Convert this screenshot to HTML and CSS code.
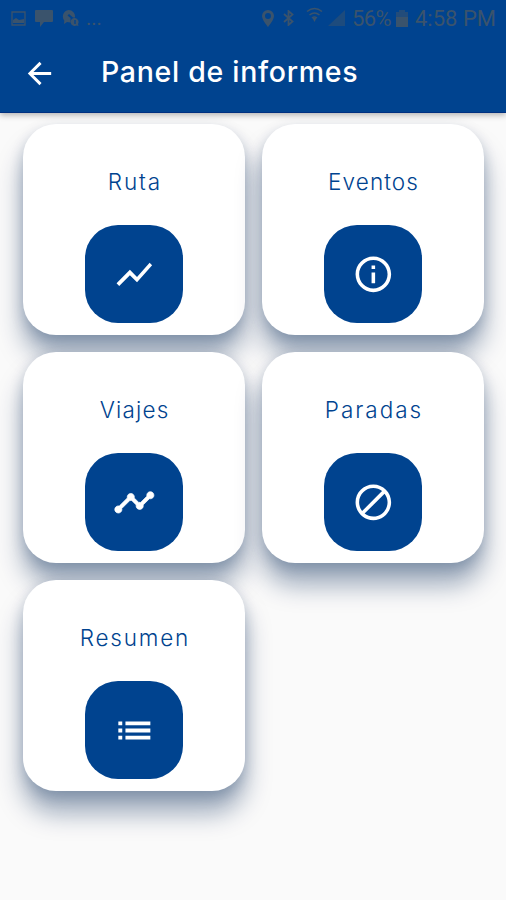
FILE: index.html
```html
<!DOCTYPE html>
<html lang="es">
<head>
    <meta charset="UTF-8">
    <meta name="viewport" content="width=device-width, initial-scale=1.0">
    <title>Panel de informes</title>
    <link rel="stylesheet" href="styles.css">
</head>
<body>
    <header class="header">
        <div class="status-bar">
            <div class="status-left">
                <svg width="15" height="15" viewBox="0 0 15 15"><path d="M1 1h13v13H1z" fill="none" stroke="currentColor" stroke-width="1.3"/><path d="M2 12V9l3-2 3 2 5-1v4z"/></svg>
                <svg width="18" height="17" viewBox="0 0 18 17"><path d="M1 0h16q1 0 1 1v10q0 1-1 1H9l-4 5v-5H1q-1 0-1-1V1q0-1 1-1z"/></svg>
                <svg width="17" height="16" viewBox="0 0 17 16"><path fill-rule="evenodd" d="M6.500 0A6.500 6.500 0 0 1 13 7.500h-2L7 4 5.500 5.500 8.500 8v4.500L5 12l-3 2 .3-3.500A6.500 6.500 0 0 1 6.500 0z"/><path fill-rule="evenodd" d="M13 8a4 4 0 0 1 3 6l.5 2-2-.5A4 4 0 1 1 13 8zm-.7 2v4h1.400v-4z"/></svg>
                <span class="dots">...</span>
            </div>
            <div class="status-right">
                <svg class="pin" width="12" height="17" viewBox="0 0 12 17"><path fill-rule="evenodd" d="M6 0a6 6 0 0 1 6 6c0 4-6 11-6 11S0 10 0 6a6 6 0 0 1 6-6zm0 3a3 3 0 1 0 0 6 3 3 0 0 0 0-6z"/></svg>
                <svg class="bluetooth" width="11" height="16" viewBox="0 0 11 16"><path d="M1 4l8.500 7.500L5.500 15V1l4 3.500L1 12" fill="none" stroke="currentColor" stroke-width="1.8"/></svg>
                <svg class="wifi" width="17" height="16" viewBox="0 0 17 16"><path d="M1 4.500q7.500-6 15 0M3.500 8q5-4 10 0M6 11q2.500-2 5 0" fill="none" stroke="currentColor" stroke-width="1.600"/><path d="M6.500 11h4l-2 4z"/></svg>
                <svg class="signal" width="17" height="16" viewBox="0 0 17 16"><path d="M17 0v16H0z"/></svg>
                <span class="battery-text">56%</span>
                <svg class="battery" width="12" height="17" viewBox="0 0 12 17"><path d="M3 0h6v2h3v15H0V2h3z" opacity=".6"/><path d="M0 7h12v10H0z"/></svg>
                <span class="time">4:58 PM</span>
            </div>
        </div>
        <div class="toolbar">
            <svg class="back" viewBox="0 0 24 24"><path d="M20 11H7.830l5.590-5.590L12 4l-8 8 8 8 1.410-1.410L7.830 13H20v-2z"/></svg>
            <h1>Panel de informes</h1>
        </div>
    </header>

    <main class="grid">
        <div class="card">
            <h2 class="ruta">Ruta</h2>
            <div class="icon">
                <svg viewBox="0 0 24 24"><path d="M3.500 18.490l6-6.010 4 4L22 6.920l-1.410-1.410-7.090 7.970-4-4L2 16.990z"/></svg>
            </div>
        </div>
        <div class="card">
            <h2 class="eventos">Eventos</h2>
            <div class="icon">
                <svg viewBox="0 0 24 24"><path d="M11 7h2v2h-2zm0 4h2v6h-2zm1-9C6.480 2 2 6.480 2 12s4.480 10 10 10 10-4.480 10-10S17.520 2 12 2zm0 18c-4.410 0-8-3.590-8-8s3.590-8 8-8 8 3.590 8 8-3.590 8-8 8z"/></svg>
            </div>
        </div>
        <div class="card">
            <h2 class="viajes">Viajes</h2>
            <div class="icon">
                <svg viewBox="0 0 24 24"><path d="M23 8c0 1.100-.9 2-2 2-.18 0-.35-.02-.51-.07l-3.560 3.550c.05.16.07.34.07.52 0 1.100-.9 2-2 2s-2-.9-2-2c0-.18.02-.36.07-.52l-2.550-2.550c-.16.05-.34.07-.52.07s-.36-.02-.52-.07l-4.550 4.560c.05.16.07.33.07.51 0 1.100-.9 2-2 2s-2-.9-2-2 .9-2 2-2c.18 0 .35.02.51.07l4.560-4.550C8.020 9.360 8 9.180 8 9c0-1.100.9-2 2-2s2 .9 2 2c0 .18-.02.36-.07.52l2.550 2.550c.16-.05.34-.07.52-.07s.36.02.52.07l3.550-3.560C19.020 8.350 19 8.180 19 8c0-1.100.9-2 2-2s2 .9 2 2z" stroke="currentColor" stroke-width=".4"/></svg>
            </div>
        </div>
        <div class="card">
            <h2 class="paradas">Paradas</h2>
            <div class="icon">
                <svg viewBox="0 0 24 24"><path d="M12 2C6.480 2 2 6.480 2 12s4.480 10 10 10 10-4.480 10-10S17.520 2 12 2zM4 12c0-4.420 3.580-8 8-8 1.850 0 3.550.63 4.900 1.690L5.690 16.900C4.630 15.550 4 13.850 4 12zm8 8c-1.850 0-3.550-.63-4.900-1.690L18.310 7.100C19.370 8.450 20 10.150 20 12c0 4.420-3.580 8-8 8z"/></svg>
            </div>
        </div>
        <div class="card">
            <h2 class="resumen">Resumen</h2>
            <div class="icon">
                <svg viewBox="0 0 24 24"><path d="M3 7h2.200v2.200H3zM3 11h2.200v2.200H3zM3 15h2.200v2.200H3zM7 7h14v2.200H7zM7 11h14v2.200H7zM7 15h14v2.200H7z"/></svg>
            </div>
        </div>
    </main>
</body>
</html>
```
FILE: styles.css
```css
* {
    box-sizing: border-box;
}
body {
    margin: 0;
    height: 900px;
    overflow: hidden;
    background: #fafafa;
    font-family: Inter, "Open Sans", sans-serif;
}
svg {
    display: block;
    flex: none;
    fill: currentColor;
}
.header {
    position: relative;
    height: 113px;
    background: #00438f;
    border-bottom: 1px solid #003080;
    box-shadow: 0 2px 6px rgba(0, 0, 0, 0.3);
}
.status-bar {
    display: flex;
    justify-content: space-between;
    height: 36px;
    padding: 0 11px;
    color: #3a536c;
    font-family: Roboto, sans-serif;
    font-size: 22px;
    line-height: 37px;
}
.status-left,
.status-right {
    display: flex;
    align-items: center;
}
.status-left {
    gap: 9px;
}
.dots {
    margin-left: -2px;
    font-size: 20px;
}
.pin {
    margin-left: 1px;
}
.bluetooth {
    margin-left: 9px;
}
.wifi {
    margin: -6px 0 0 12px;
}
.signal {
    margin-left: 5px;
    opacity: 0.5;
}
.battery-text {
    width: 39px;
    margin-left: 7px;
    letter-spacing: -0.6px;
}
.battery {
    margin-left: 5px;
}
.time {
    width: 80px;
    margin-left: 7px;
    white-space: nowrap;
}
.toolbar {
    display: flex;
    align-items: center;
    height: 74px;
    padding-left: 22px;
    color: white;
}
.back {
    width: 35px;
    height: 35px;
}
h1 {
    margin: -4px 0 0 44px;
    font-size: 28.5px;
    font-weight: 500;
    letter-spacing: 0.7px;
    white-space: nowrap;
}
.grid {
    display: grid;
    grid-template-columns: 222px 222px;
    grid-auto-rows: 211px;
    gap: 17px;
    padding: 11px 0 0 23px;
}
.card {
    display: flex;
    flex-direction: column;
    align-items: center;
    padding-top: 43px;
    background: white;
    border-radius: 33px;
    box-shadow: 0 22px 26px rgba(0, 38, 84, 0.38), 0 5px 14px rgba(0, 38, 84, 0.2);
}
h2 {
    margin: 0;
    height: 58px;
    color: #00438f;
    font-size: 22.5px;
    font-weight: 300;
    line-height: 29px;
}
.ruta {
    letter-spacing: 1.9px;
    margin-right: -1.9px;
}
.eventos {
    letter-spacing: 1.1px;
    margin-right: -1.1px;
}
.viajes {
    letter-spacing: 1.2px;
    margin-right: -1.2px;
}
.paradas {
    letter-spacing: 2px;
    margin-right: -2px;
}
.resumen {
    letter-spacing: 1.8px;
    margin-right: -1.8px;
}
.icon {
    display: flex;
    align-items: center;
    justify-content: center;
    width: 98px;
    height: 98px;
    border-radius: 33px;
    background: #00438f;
    color: white;
}
.icon svg {
    width: 42.7px;
    height: 42.7px;
}
```
